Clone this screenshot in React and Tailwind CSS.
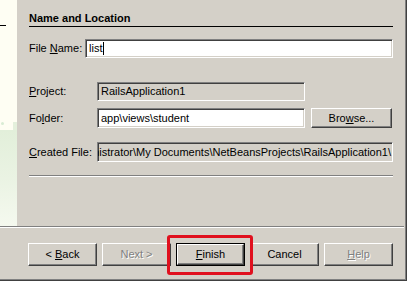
export default function App() {
  const sunken =
    "border border-t-[#808080] border-l-[#808080] border-b-white border-r-white shadow-[inset_1px_1px_0_#404040,inset_-1px_-1px_0_#d4d0c8]";
  const raised =
    "border border-t-white border-l-white border-b-[#404040] border-r-[#404040] shadow-[inset_-1px_-1px_0_#808080]";
  const disabledText = "text-[#808080] [text-shadow:1px_1px_0_#ffffff]";
  return (
    <div className="w-[407px] h-[281px] bg-[#d4d0c8] font-['Liberation_Sans',Arial,sans-serif] text-[11px] text-black overflow-hidden shadow-[inset_-1px_-1px_0_#404040,inset_-2px_-2px_0_#808080]">
      <div className="flex w-[404px] h-[226px]">
        {/* left image strip */}
        <div className="w-[17px] shrink-0 h-full bg-[#fefef3] flex flex-col">
          <div className="h-[25px]" />
          <div className="h-px w-[6px] bg-black" />
          <div className="h-[96px] relative">
            <div className="absolute left-[1px] top-[96px] w-[3px] h-[3px] rounded-full bg-[#d8ecd4]" />
          </div>
          <div className="flex justify-end h-[8px]">
            <div className="w-[4px] h-full bg-[#e4f0dc]" />
          </div>
          <div className="flex-1 bg-gradient-to-b from-[#e2efda] via-[#eaf3e3] to-[#f5f9ef]" />
        </div>

        {/* main content */}
        <div className="w-[387px] min-w-0 shrink-0 flex flex-col pl-[12px] pr-[11px]">
          <div className="mt-[12px] h-[15px] border-b border-black font-bold text-[11px] leading-[13px]">
            Name and Location
          </div>

          <div className="mt-[12px] h-[19px] flex items-center">
            <div className="w-[56px] shrink-0">
              File <span className="underline">N</span>ame:
            </div>
            <div className={`flex-1 h-full bg-white ${sunken} flex items-center pl-[3px]`}>
              <span>list</span>
              <span className="w-px h-[13px] bg-black ml-px" />
            </div>
          </div>

          <div className="mt-[24px] h-[19px] flex items-center">
            <div className="w-[68px] shrink-0">
              <span className="underline">P</span>roject:
            </div>
            <div className={`w-[208px] h-full bg-[#d4d0c8] ${sunken} flex items-center pl-[3px]`}>
              RailsApplication1
            </div>
          </div>

          <div className="mt-[7px] h-[20px] flex items-center">
            <div className="w-[68px] shrink-0">
              Fo<span className="underline">l</span>der:
            </div>
            <div className={`w-[208px] h-full bg-white ${sunken} flex items-center pl-[3px]`}>
              app\views\student
            </div>
            <div className={`ml-[6px] w-[81px] h-full ${raised} flex items-center justify-center`}>
              Bro<span className="underline">w</span>se...
            </div>
          </div>

          <div className="mt-[14px] h-[20px] flex items-center">
            <div className="w-[68px] shrink-0">
              <span className="underline">C</span>reated File:
            </div>
            <div className={`w-[296px] min-w-0 h-full bg-[#d4d0c8] ${sunken} flex items-center justify-end overflow-hidden pr-[1px]`}>
              <span className="whitespace-nowrap shrink-0">
                nistrator\My Documents\NetBeansProjects\RailsApplication1\
              </span>
            </div>
          </div>

          <div className="mt-[13px] h-px bg-[#808080]" />
          <div className="h-px bg-white" />
        </div>
      </div>

      <div className="w-[404px] h-px bg-[#808080]" />
      <div className="w-[404px] h-px bg-white" />

      <div className="w-[404px] h-[51px] flex items-start pl-[28px] pt-[15px] gap-[5px]">
        <div className={`w-[69px] h-[23px] ${raised} flex items-center justify-center`}>
          &lt; <span className="underline ml-[3px]">B</span>ack
        </div>
        <div className={`w-[69px] h-[23px] ${raised} flex items-center justify-center ${disabledText}`}>
          Next &gt;
        </div>
        <div className="relative w-[69px] h-[23px]">
          <div className="w-full h-full border border-black">
            <div className={`w-full h-full ${raised} flex items-center justify-center`}>
              <span className="underline">F</span>inish
            </div>
          </div>
          <div className="absolute left-[-9px] right-[-8px] top-[-8px] bottom-[-9px] border-[3px] border-[#e0101e] rounded-[3px]" />
        </div>
        <div className={`w-[69px] h-[23px] ${raised} flex items-center justify-center`}>
          Cancel
        </div>
        <div className={`w-[69px] h-[23px] ${raised} flex items-center justify-center ${disabledText}`}>
          <span className="underline">H</span>elp
        </div>
      </div>
    </div>
  );
}
